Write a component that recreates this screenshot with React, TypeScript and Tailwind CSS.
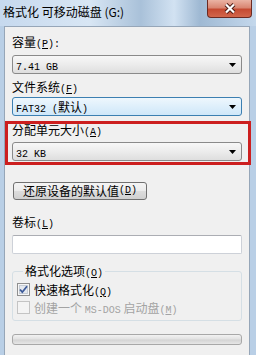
import React from "react";

const cjk = "font-['Noto_Sans_CJK_SC','Noto_Sans',sans-serif]";
const mono = "font-['Liberation_Mono','Noto_Sans_CJK_SC',monospace]";

function Hk({ k }: { k: string }) {
  return (
    <span className={`${mono} text-[10px] leading-[12px]`}>
      (<span className="underline">{k}</span>)
    </span>
  );
}

function Label({ text, k, colon }: { text: string; k: string; colon?: boolean }) {
  return (
    <div className={`${cjk} h-[12px] text-[12px] leading-[12px] text-black`}>
      {text}
      <Hk k={k} />
      {colon && <span className={`${mono} text-[10px] leading-[12px]`}>:</span>}
    </div>
  );
}

function Arrow() {
  return (
    <svg width="7" height="4" viewBox="0 0 7 4">
      <path d="M0 0 H7 L3.5 4 Z" fill="#000" />
    </svg>
  );
}

function Combo({ children, hot }: { children: React.ReactNode; hot?: boolean }) {
  return (
    <div
      className={
        hot
          ? "flex h-[19px] items-center justify-between rounded-[3px] border border-[#3c7fb1] bg-[linear-gradient(to_bottom,#eef7fd_0%,#deeffb_50%,#cfe7f9_100%)] pl-[3px] pr-[5px]"
          : "flex h-[19px] items-center justify-between rounded-[3px] border border-[#8a8a8a] bg-[linear-gradient(to_bottom,#f7f7f7_0%,#ececec_50%,#dedede_100%)] pl-[3px] pr-[5px]"
      }
    >
      <span className="h-[12px] text-[12px] leading-[12px] text-black">{children}</span>
      <Arrow />
    </div>
  );
}

function CheckBox({ checked, disabled }: { checked?: boolean; disabled?: boolean }) {
  return (
    <svg width="13" height="13" viewBox="0 0 13 13" className="shrink-0">
      <rect x="0.5" y="0.5" width="12" height="12" fill={disabled ? "#f4f4f4" : "#f6f6f6"} stroke={disabled ? "#c4c4c4" : "#8f8f8f"} />
      {!disabled && <rect x="2.5" y="2.5" width="8" height="8" fill="#e4e8ee" stroke="#c6ccd4" />}
      {checked && (
        <path d="M3 6.5 L5.3 9.2 L10 3.2" fill="none" stroke="#3d5a98" strokeWidth="1.8" />
      )}
    </svg>
  );
}

export default function App() {
  return (
    <div className={`flex h-[355px] w-[256px] flex-col overflow-hidden bg-[#b9cfe6] ${cjk}`}>
      <div className="flex h-[26px] shrink-0 items-start justify-between bg-[linear-gradient(to_right,#c6d9ee_0%,#d8e6f4_35%,#a9c1d9_55%,#d2e2f2_68%,#9fb9d3_78%,#c4d8ec_100%)]">
        <div className="pl-[3px] pt-[5px] text-[12px] leading-[14px] text-black">格式化 可移动磁盘 (G:)</div>
        <div className="mr-[4px] flex h-[18px] w-[45px] items-center justify-center rounded-b-[4px] border border-t-0 border-[#6b2a22] bg-[linear-gradient(to_bottom,#eab3a4_0%,#d98672_45%,#c54a32_55%,#d2664b_100%)]">
          <svg width="12" height="11" viewBox="0 0 12 11">
            <path d="M2 1.5 L10 9.5 M10 1.5 L2 9.5" stroke="#4a1a14" strokeWidth="4" />
            <path d="M2 1.5 L10 9.5 M10 1.5 L2 9.5" stroke="#ffffff" strokeWidth="2.2" />
          </svg>
        </div>
      </div>

      <div className="ml-[4px] mr-[6px] flex h-[340px] shrink-0 flex-col border border-[#96a6b8] bg-[#f0f0f0] pl-[7px] pr-[7px] pt-[9px]">
        <Label text="容量" k="P" colon />
        <div className="mt-[7px]">
          <Combo>
            <span className={`${mono} text-[10px]`}>7.41 GB</span>
          </Combo>
        </div>

        <div className="mt-[7px]">
          <Label text="文件系统" k="F" />
        </div>
        <div className="mt-[4px]">
          <Combo hot>
            <span className={`${mono} text-[10px]`}>FAT32 (</span>
            <span className={`${cjk} text-[12px]`}>默认</span>
            <span className={`${mono} text-[10px]`}>)</span>
          </Combo>
        </div>

        <div className="-ml-[7px] -mr-[9px] mt-[5px] border-[3px] border-[#cc1f1f] pb-[1px] pl-[4px] pr-[6px]">
          <Label text="分配单元大小" k="A" />
          <div className="mt-[6px]">
            <Combo>
              <span className={`${mono} text-[10px]`}>32 KB</span>
            </Combo>
          </div>
        </div>

        <button className="ml-[1px] mt-[17px] flex h-[18px] w-[134px] shrink-0 items-center justify-center rounded-[3px] border border-[#707070] bg-[linear-gradient(to_bottom,#f4f4f4_0%,#ebebeb_50%,#dddddd_50%,#d0d0d0_100%)] text-[12px] leading-[12px] text-black">
          还原设备的默认值<Hk k="D" />
        </button>

        <div className="mt-[16px]">
          <Label text="卷标" k="L" />
        </div>
        <div className="mt-[7px] h-[19px] shrink-0 rounded-[2px] border border-[#cdd1d8] border-t-[#abadb3] bg-white" />

        <fieldset className="mt-[11px] rounded-[3px] border border-[#d5dfe5] pb-[6px] pl-[4px]">
          <legend className="ml-[6px] h-[12px] px-[2px] text-[12px] leading-[12px] text-black">
            格式化选项<Hk k="O" />
          </legend>
          <div className="mt-[6px] flex h-[13px] items-center gap-[4px]">
            <CheckBox checked />
            <span className="h-[12px] text-[12px] leading-[12px] text-black">
              快速格式化<Hk k="Q" />
            </span>
          </div>
          <div className="mt-[5px] flex h-[13px] items-center gap-[4px]">
            <CheckBox disabled />
            <span className="h-[12px] text-[12px] leading-[12px] text-[#a3a3a3]">
              创建一个 <span className={`${mono} text-[10px] leading-[12px]`}>MS-DOS</span> 启动盘<Hk k="M" />
            </span>
          </div>
        </fieldset>

        <div className="mt-[13px] h-[11px] shrink-0 rounded-[3px] border border-[#a8a8a8] bg-[linear-gradient(to_bottom,#f2f2f2_0%,#e2e2e2_45%,#d4d4d4_55%,#e6e6e6_100%)]" />
      </div>
    </div>
  );
}
